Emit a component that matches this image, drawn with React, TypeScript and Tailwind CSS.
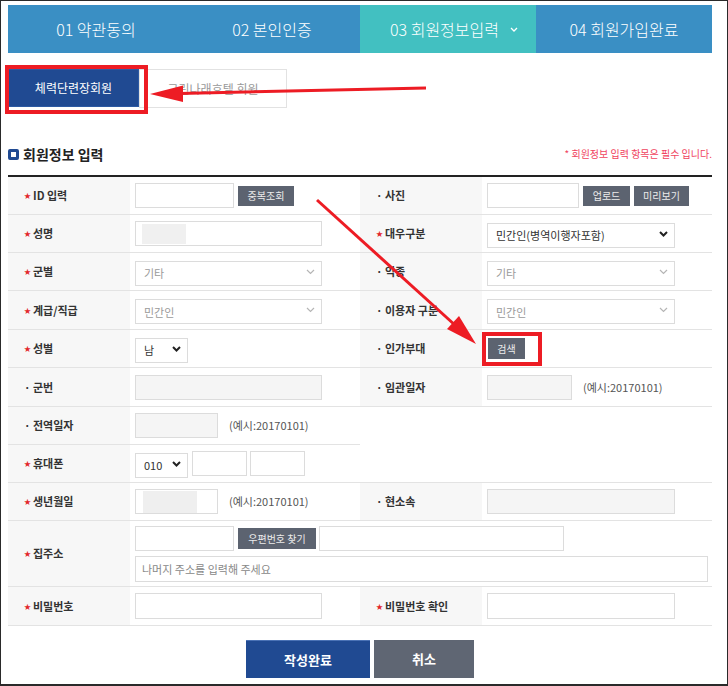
import { ReactNode } from 'react'

const Chevron = ({ dark }: { dark?: boolean }) => (
  <svg
    className="pointer-events-none absolute right-[7px] top-1/2 -translate-y-1/2"
    width="9"
    height="6"
    viewBox="0 0 9 6"
  >
    <polyline
      points="1,1 4.5,4.5 8,1"
      fill="none"
      stroke={dark ? '#222' : '#b5b5b5'}
      strokeWidth={dark ? 2 : 1.2}
    />
  </svg>
)

const Label = ({ text, required }: { text: string; required?: boolean }) => (
  <div className="flex items-center border-b border-[#e3e3e3] bg-[#f7f7f7] pl-[16px] text-[11px] font-bold text-[#333]">
    {required ? (
      <span className="mr-[4px] w-[5px] text-[7px] leading-none text-[#e3262b]">★</span>
    ) : (
      <span className="mr-[4px] w-[5px] text-[11px] leading-none text-[#333]">·</span>
    )}
    {text}
  </div>
)

const Cell = ({ children, className = '' }: { children?: ReactNode; className?: string }) => (
  <div className={`flex items-center border-b border-[#e3e3e3] bg-white pl-[5px] ${className}`}>{children}</div>
)

const Select = ({ className, value, dim }: { className: string; value: string; dim?: boolean }) => (
  <div className={`relative h-[25px] ${className}`}>
    <select
      defaultValue={value}
      className={`h-full w-full appearance-none border border-[#dcdcdc] bg-white pl-[8px] text-[11px] outline-none ${dim ? 'text-[#9a9a9a]' : 'text-[#333]'}`}
    >
      <option>{value}</option>
    </select>
    <Chevron dark={!dim} />
  </div>
)

const GrayBtn = ({ text, className = '' }: { text: string; className?: string }) => (
  <button className={`flex h-[20px] items-center justify-center bg-[#5c6370] text-[10px] text-[#ececec] ${className}`}>{text}</button>
)

const Example = () => <span className="ml-[11px] text-[11px] text-[#555]">(예시:20170101)</span>

export default function App() {
  return (
    <div className="relative h-[686px] w-[728px] overflow-hidden border border-b-2 border-[#2a2a2a] bg-white pl-[7px] pr-[15px] pt-[4px] font-['Noto_Sans_CJK_KR',sans-serif]">
      {/* step tabs */}
      <div className="flex h-[48px] text-[16px] font-light text-white">
        <div className="flex w-[176px] items-center justify-center bg-[#3a8fc4]">01 약관동의</div>
        <div className="flex w-[176px] items-center justify-center bg-[#3a8fc4]">02 본인인증</div>
        <div className="flex w-[176px] items-center justify-center gap-[11px] bg-[#42c0c1] pl-[12px]">
          03 회원정보입력
          <svg width="8" height="5" viewBox="0 0 8 5">
            <polyline points="1,1 4,4 7,1" fill="none" stroke="#fff" strokeWidth="1.3" />
          </svg>
        </div>
        <div className="flex w-[176px] items-center justify-center bg-[#3a8fc4]">04 회원가입완료</div>
      </div>

      {/* member type */}
      <div className="mt-[16px] flex">
        <button className="h-[38px] w-[131px] border border-[#2d5aa3] bg-[#204a92] text-[12px] text-white">체력단련장회원</button>
        <button className="h-[39px] w-[148px] border border-[#e2e2e2] bg-white text-[12px] text-[#999]">그린나래호텔 회원</button>
      </div>

      {/* heading */}
      <div className="mt-[36px] flex h-[20px] items-center justify-between">
        <div className="flex items-center gap-[4px]">
          <span className="h-[11px] w-[11px] rounded-[2px] border-[3px] border-[#204a92]" />
          <h2 className="text-[14px] font-bold text-[#222]">회원정보 입력</h2>
        </div>
        <p className="mb-[2px] text-[10px] text-[#f0435e]">* 회원정보 입력 항목은 필수 입니다.</p>
      </div>

      {/* form table */}
      <div className="mt-[11px] grid grid-cols-[122px_230px_122px_230px] grid-rows-[38px_38px_38px_39px_38px_39px_38px_38px_38px_66px_39px] border-t-2 border-[#222]">
        <Label text="ID 입력" required />
        <Cell>
          <input className="h-[25px] w-[99px] border border-[#dcdcdc] bg-white" />
          <GrayBtn text="중복조회" className="ml-[4px] w-[56px]" />
        </Cell>
        <Label text="사진" />
        <Cell>
          <input className="h-[25px] w-[92px] border border-[#dcdcdc] bg-white" />
          <GrayBtn text="업로드" className="ml-[4px] w-[47px]" />
          <GrayBtn text="미리보기" className="ml-[4px] w-[55px]" />
        </Cell>

        <Label text="성명" required />
        <Cell>
          <div className="relative h-[25px] w-[187px] border border-[#dcdcdc] bg-white">
            <div className="absolute left-[6px] top-[2px] h-[20px] w-[44px] bg-[#f0f0f0]" />
          </div>
        </Cell>
        <Label text="대우구분" required />
        <Cell>
          <Select className="w-[188px]" value="민간인(병역이행자포함)" />
        </Cell>

        <Label text="군별" required />
        <Cell>
          <Select className="w-[187px]" value="기타" dim />
        </Cell>
        <Label text="익종" />
        <Cell>
          <Select className="w-[188px]" value="기타" dim />
        </Cell>

        <Label text="계급/직급" required />
        <Cell>
          <Select className="w-[187px]" value="민간인" dim />
        </Cell>
        <Label text="이용자 구분" />
        <Cell>
          <Select className="w-[188px]" value="민간인" dim />
        </Cell>

        <Label text="성별" required />
        <Cell>
          <Select className="w-[53px]" value="남" />
        </Cell>
        <Label text="인가부대" />
        <Cell className="pl-[6px]">
          <GrayBtn text="검색" className="h-[21px] w-[37px]" />
        </Cell>

        <Label text="군번" />
        <Cell>
          <input disabled className="h-[25px] w-[187px] border border-[#dcdcdc] bg-[#f5f5f5]" />
        </Cell>
        <Label text="임관일자" />
        <Cell>
          <input disabled className="h-[25px] w-[85px] border border-[#dcdcdc] bg-[#f5f5f5]" />
          <Example />
        </Cell>

        <Label text="전역일자" />
        <Cell>
          <input disabled className="h-[25px] w-[83px] border border-[#dcdcdc] bg-[#f5f5f5]" />
          <Example />
        </Cell>
        <div className="col-span-2 row-span-2 border-b border-[#e3e3e3] bg-white" />

        <Label text="휴대폰" required />
        <Cell>
          <Select className="w-[53px]" value="010" />
          <input className="ml-[4px] h-[25px] w-[55px] border border-[#dcdcdc] bg-white" />
          <input className="ml-[3px] h-[25px] w-[55px] border border-[#dcdcdc] bg-white" />
        </Cell>

        <Label text="생년월일" required />
        <Cell>
          <div className="relative h-[25px] w-[83px] border border-[#dcdcdc] bg-white">
            <div className="absolute left-[7px] top-[1px] h-[22px] w-[54px] bg-[#efefef]" />
          </div>
          <Example />
        </Cell>
        <Label text="현소속" />
        <Cell>
          <input disabled className="h-[25px] w-[188px] border border-[#dcdcdc] bg-[#f5f5f5]" />
        </Cell>

        <Label text="집주소" required />
        <div className="col-span-3 flex flex-col justify-center gap-[5px] border-b border-[#e3e3e3] bg-white pl-[5px]">
          <div className="flex items-center">
            <input className="h-[25px] w-[99px] border border-[#dcdcdc] bg-white" />
            <GrayBtn text="우편번호 찾기" className="ml-[4px] h-[21px] w-[78px]" />
            <input className="ml-[3px] h-[25px] w-[245px] border border-[#dcdcdc] bg-white" />
          </div>
          <input
            placeholder="나머지 주소를 입력해 주세요"
            className="h-[26px] w-[573px] border border-[#dcdcdc] bg-white pl-[6px] text-[11px] placeholder:text-[#888]"
          />
        </div>

        <Label text="비밀번호" required />
        <Cell>
          <input type="password" className="h-[26px] w-[187px] border border-[#dcdcdc] bg-white" />
        </Cell>
        <Label text="비밀번호 확인" required />
        <Cell>
          <input type="password" className="h-[26px] w-[188px] border border-[#dcdcdc] bg-white" />
        </Cell>
      </div>

      {/* submit */}
      <div className="mt-[14px] flex justify-center gap-[4px]">
        <button className="h-[38px] w-[124px] border-t border-[#4a72b5] bg-[#204a92] text-[13px] font-bold text-white">작성완료</button>
        <button className="h-[38px] w-[100px] bg-[#5f6673] text-[13px] font-bold text-white">취소</button>
      </div>

      {/* red annotations over the capture */}
      <svg className="pointer-events-none absolute left-0 top-0" width="728" height="686" viewBox="0 0 728 686">
        <rect x="6" y="66" width="139" height="45" fill="none" stroke="#ed1c24" strokeWidth="4" />
        <line x1="425" y1="87" x2="178" y2="92.5" stroke="#ed1c24" strokeWidth="3" />
        <polygon points="149,93 182,84.5 182,101" fill="#ed1c24" />
        <rect x="483" y="333" width="56" height="30" fill="none" stroke="#ed1c24" strokeWidth="4" />
        <line x1="316" y1="199" x2="455" y2="325" stroke="#ed1c24" strokeWidth="3" />
        <polygon points="475,343 446,328 458,315" fill="#ed1c24" />
      </svg>
    </div>
  )
}
